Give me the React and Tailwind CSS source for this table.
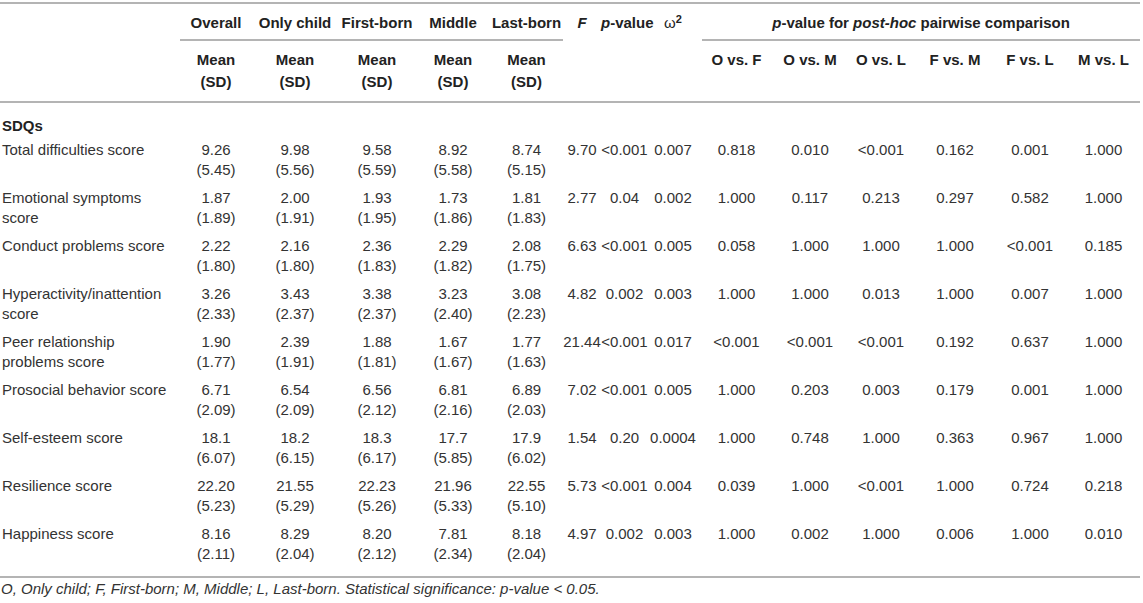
import React from "react";

const rows = [
  ["Total difficulties score", [["9.26","(5.45)"],["9.98","(5.56)"],["9.58","(5.59)"],["8.92","(5.58)"],["8.74","(5.15)"]], ["9.70","<0.001","0.007","0.818","0.010","<0.001","0.162","0.001","1.000"]],
  ["Emotional symptoms score", [["1.87","(1.89)"],["2.00","(1.91)"],["1.93","(1.95)"],["1.73","(1.86)"],["1.81","(1.83)"]], ["2.77","0.04","0.002","1.000","0.117","0.213","0.297","0.582","1.000"]],
  ["Conduct problems score", [["2.22","(1.80)"],["2.16","(1.80)"],["2.36","(1.83)"],["2.29","(1.82)"],["2.08","(1.75)"]], ["6.63","<0.001","0.005","0.058","1.000","1.000","1.000","<0.001","0.185"]],
  ["Hyperactivity/inattention score", [["3.26","(2.33)"],["3.43","(2.37)"],["3.38","(2.37)"],["3.23","(2.40)"],["3.08","(2.23)"]], ["4.82","0.002","0.003","1.000","1.000","0.013","1.000","0.007","1.000"]],
  ["Peer relationship problems score", [["1.90","(1.77)"],["2.39","(1.91)"],["1.88","(1.81)"],["1.67","(1.67)"],["1.77","(1.63)"]], ["21.44","<0.001","0.017","<0.001","<0.001","<0.001","0.192","0.637","1.000"]],
  ["Prosocial behavior score", [["6.71","(2.09)"],["6.54","(2.09)"],["6.56","(2.12)"],["6.81","(2.16)"],["6.89","(2.03)"]], ["7.02","<0.001","0.005","1.000","0.203","0.003","0.179","0.001","1.000"]],
  ["Self-esteem score", [["18.1","(6.07)"],["18.2","(6.15)"],["18.3","(6.17)"],["17.7","(5.85)"],["17.9","(6.02)"]], ["1.54","0.20","0.0004","1.000","0.748","1.000","0.363","0.967","1.000"]],
  ["Resilience score", [["22.20","(5.23)"],["21.55","(5.29)"],["22.23","(5.26)"],["21.96","(5.33)"],["22.55","(5.10)"]], ["5.73","<0.001","0.004","0.039","1.000","<0.001","1.000","0.724","0.218"]],
  ["Happiness score", [["8.16","(2.11)"],["8.29","(2.04)"],["8.20","(2.12)"],["7.81","(2.34)"],["8.18","(2.04)"]], ["4.97","0.002","0.003","1.000","0.002","1.000","0.006","1.000","0.010"]],
];

const groups = ["Overall", "Only child", "First-born", "Middle", "Last-born"];
const pairs = ["O vs. F", "O vs. M", "O vs. L", "F vs. M", "F vs. L", "M vs. L"];

export default function App() {
  return (
    <div className="w-[1143px] h-[603px] bg-white pt-[2px] font-['Liberation_Sans',Arial,sans-serif] text-[#333] overflow-hidden">
      <table className="table-fixed border-separate border-spacing-0 w-[1140px] border-t-2 border-[#b4b4b4]">
        <colgroup>
          <col className="w-[180px]" />
          <col className="w-[72px]" />
          <col className="w-[86px]" />
          <col className="w-[78px]" />
          <col className="w-[74px]" />
          <col className="w-[73px]" />
          <col className="w-[38px]" />
          <col className="w-[47px]" />
          <col className="w-[50px]" />
          <col className="w-[77px]" />
          <col className="w-[70px]" />
          <col className="w-[72px]" />
          <col className="w-[76px]" />
          <col className="w-[74px]" />
          <col className="w-[73px]" />
        </colgroup>
        <thead>
          <tr className="text-[15px] leading-[22px] font-bold text-[#222]">
            <th className="p-0"></th>
            {groups.map((g) => (
              <th key={g} className="p-0 align-top font-bold">
                <div className="pt-[8px] pb-[5px] border-b-2 border-[#b4b4b4] whitespace-nowrap text-center">{g}</div>
              </th>
            ))}
            <th className="p-0 align-top">
              <div className="pt-[8px] pb-[5px] border-b-2 border-transparent text-center italic">F</div>
            </th>
            <th className="p-0 align-top">
              <div className="pt-[8px] pb-[5px] border-b-2 border-transparent text-center whitespace-nowrap"><span className="italic">p</span>-value</div>
            </th>
            <th className="p-0 align-top">
              <div className="pt-[8px] pb-[5px] border-b-2 border-transparent text-center whitespace-nowrap font-normal">ω<sup className="font-bold text-[11px]">2</sup></div>
            </th>
            <th colSpan={6} className="p-0 align-top">
              <div className="ml-[4px] pt-[8px] pb-[5px] border-b-2 border-[#b4b4b4] text-center whitespace-nowrap">
                <span className="italic">p</span>-value for <span className="italic">post-hoc</span> pairwise comparison
              </div>
            </th>
          </tr>
          <tr className="text-[15px] leading-[22px] font-bold text-[#222]">
            <th className="p-0 border-b-2 border-[#b4b4b4]"></th>
            {groups.map((g) => (
              <th key={g} className="pt-[8px] pb-[8px] px-0 align-top text-center border-b-2 border-[#b4b4b4]">
                <div>Mean</div>
                <div>(SD)</div>
              </th>
            ))}
            <th className="p-0 border-b-2 border-[#b4b4b4]"></th>
            <th className="p-0 border-b-2 border-[#b4b4b4]"></th>
            <th className="p-0 border-b-2 border-[#b4b4b4]"></th>
            {pairs.map((p) => (
              <th key={p} className="pt-[8px] pb-[8px] px-0 align-top text-center whitespace-nowrap border-b-2 border-[#b4b4b4]">{p}</th>
            ))}
          </tr>
        </thead>
        <tbody className="text-[15px] leading-[20px]">
          <tr>
            <td colSpan={15} className="pt-[13px] pb-0 pl-[2px] font-bold text-[#222]">SDQs</td>
          </tr>
          {rows.map(([label, means, stats], i) => {
            const last = i === rows.length - 1;
            const pad = last ? "pt-[4px] pb-[12px] border-b-2 border-[#b4b4b4]" : "pt-[4px] pb-[4px]";
            return (
              <tr key={label}>
                <td className={`${pad} pl-[2px] pr-[8px] align-top`}>{label}</td>
                {means.map(([m, sd], j) => (
                  <td key={j} className={`${pad} px-0 align-top text-center`}>
                    <div>{m}</div>
                    <div>{sd}</div>
                  </td>
                ))}
                {stats.map((s, j) => (
                  <td key={j} className={`${pad} px-0 align-top text-center whitespace-nowrap`}>{s}</td>
                ))}
              </tr>
            );
          })}
        </tbody>
      </table>
      <div className="mt-[2px] text-[15px] leading-[18px] italic text-[#333] pl-[1px]">
        O, Only child; F, First-born; M, Middle; L, Last-born. Statistical significance: p-value &lt; 0.05.
      </div>
    </div>
  );
}
